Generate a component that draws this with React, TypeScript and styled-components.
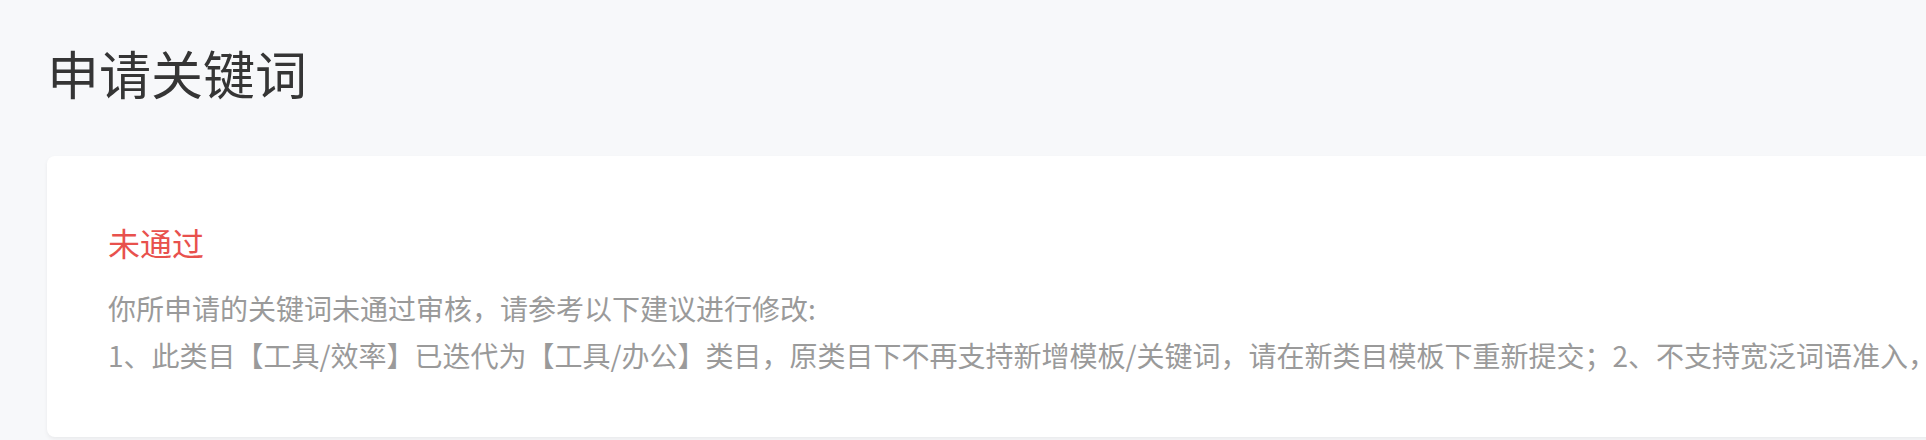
import React from 'react';
import styled, {createGlobalStyle} from 'styled-components';

const GlobalStyle = createGlobalStyle`
  html, body {
    margin: 0;
    padding: 0;
    background: #f7f8fa;
    font-family: "Noto Sans CJK SC", "Noto Sans", sans-serif;
  }
`;

const Page = styled.div`
  position: relative;
  width: 100%;
  height: 440px;
  overflow: hidden;
  box-sizing: border-box;
  padding: 36px 0 0 47px;
`;

const Title = styled.h1`
  margin: 0;
  font-size: 52px;
  line-height: 73px;
  font-weight: 400;
  color: #353535;
`;

const Card = styled.section`
  margin-top: 47px;
  width: 1960px;
  box-sizing: border-box;
  padding: 62px 0 58px 61px;
  background: #fff;
  border-radius: 8px;
  box-shadow: 0 2px 4px rgba(0, 0, 0, 0.06);
`;

const Status = styled.div<{ $tone: 'fail' | 'pass' }>`
  font-size: 32px;
  line-height: 49px;
  color: ${p => (p.$tone === 'fail' ? '#e8514d' : '#07c160')};
`;

const Reason = styled.div`
  margin-top: 18px;
  font-size: 28px;
  line-height: 47px;
  color: #9a9a9a;
`;

const ReasonLine = styled.p`
  margin: 0;
  white-space: nowrap;
`;

// faint user-id watermark laid over the whole page
const Watermark = styled.div`
  position: absolute;
  left: -23px;
  top: 14px;
  display: grid;
  grid-template-columns: repeat(5, 430px);
  grid-auto-rows: 92px;
  pointer-events: none;
`;

const Mark = styled.span`
  font-family: "Noto Sans", sans-serif;
  font-size: 28px;
  line-height: 92px;
  color: rgba(0, 0, 0, 0.018);
  white-space: nowrap;
`;

const reasons = [
    '你所申请的关键词未通过审核，请参考以下建议进行修改:',
    '1、此类目【工具/效率】已迭代为【工具/办公】类目，原类目下不再支持新增模板/关键词，请在新类目模板下重新提交；2、不支持宽泛词语准入，',
];

export default function App() {
    const marks = Array.from({length: 25});
    return (
        <>
            <GlobalStyle/>
            <Page>
                <Title>申请关键词</Title>
                <Card>
                    <Status $tone="fail">未通过</Status>
                    <Reason>
                        {reasons.map((line, i) => <ReasonLine key={i}>{line}</ReasonLine>)}
                    </Reason>
                </Card>
                <Watermark>
                    {marks.map((_, i) => <Mark key={i}>4I6ES8eNW59</Mark>)}
                </Watermark>
            </Page>
        </>
    );
}
